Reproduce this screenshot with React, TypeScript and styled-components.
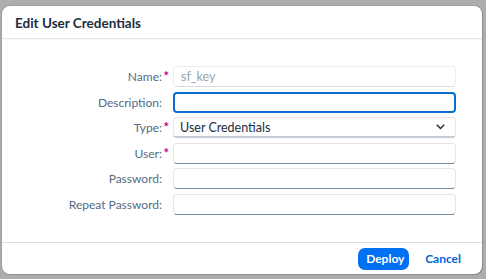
import React from "react";
import styled, { createGlobalStyle, css } from "styled-components";

const Global = createGlobalStyle`
  html, body { margin: 0; padding: 0; }
  body {
    background: #abadaf;
    font-family: "Lato", "Noto Sans", sans-serif;
    width: 486px;
    height: 279px;
    overflow: hidden;
  }
`;

const Dialog = styled.div`
  margin: 6px 0 0 2px;
  width: 480px;
  height: 268px;
  background: #fff;
  border-radius: 8px;
  box-shadow: 1px 1px 0 #8d8f92, 0 0 2px rgba(0,0,0,0.25);
  display: flex;
  flex-direction: column;
  overflow: hidden;
`;

const Header = styled.div`
  height: 31px;
  border-bottom: 1px solid #e8e8e8;
  display: flex;
  align-items: center;
  padding-left: 13px;
  padding-top: 1px;
  box-shadow: 0 1px 1px rgba(0,0,0,0.03);
`;

const Title = styled.h1`
  margin: 0;
  font-size: 13.5px;
  font-weight: 700;
  color: #1d2d3e;
`;

const Content = styled.div`
  flex: 1;
  padding-top: 27px;
`;

const Form = styled.div`
  display: grid;
  grid-template-columns: 167px 283px;
  column-gap: 4px;
  row-gap: 4.6px;
  grid-auto-rows: 21px;
`;

const Label = styled.label<{ $required?: boolean }>`
  display: flex;
  align-items: center;
  justify-content: flex-end;
  padding-right: 7px;
  font-size: 12px;
  color: #556b82;
  position: relative;
  ${(p) =>
    p.$required &&
    css`
      &::after {
        content: "*";
        position: absolute;
        right: 0px;
        top: 2px;
        color: #ba066c;
        font-size: 13px;
        font-weight: 700;
      }
    `}
`;

const fieldBase = css`
  box-sizing: border-box;
  height: 21px;
  border-radius: 4px;
  background: #fff;
  font-family: inherit;
  font-size: 12.5px;
  color: #1d2d3e;
  outline: none;
`;

const Input = styled.input<{ $variant?: "readonly" | "focus" | "normal" }>`
  ${fieldBase}
  width: 100%;
  padding: 0 7px;
  border: 1px solid #e5e5e5;
  border-bottom-color: #788a9b;
  ${(p) =>
    p.$variant === "readonly" &&
    css`
      color: #9aa4ae;
      border-color: #ececec;
      border-bottom-color: #d9dde1;
    `}
  ${(p) =>
    p.$variant === "focus" &&
    css`
      border: 2px solid #0a6ed1;
      border-radius: 4px;
    `}
`;

const Select = styled.div`
  ${fieldBase}
  display: flex;
  align-items: center;
  justify-content: space-between;
  padding: 0 10px 0 6px;
  border: 1px solid #e8e8e8;
  border-bottom: 2px solid #c4cbd2;
  box-shadow: 0 0 1px rgba(0,0,0,0.05);
`;

const Footer = styled.div`
  height: 31px;
  border-top: 1px solid #dcdcdc;
  display: flex;
  align-items: center;
  justify-content: flex-end;
  gap: 13px;
  padding-right: 18px;
`;

const Button = styled.button<{ $primary?: boolean }>`
  font-family: inherit;
  font-size: 12px;
  font-weight: 700;
  height: 22px;
  border-radius: 7px;
  border: none;
  padding: 0 8px;
  cursor: pointer;
  ${(p) =>
    p.$primary
      ? css`
          background: #0070f2;
          color: #fff;
          width: 51px;
        `
      : css`
          background: transparent;
          color: #0064d9;
          padding: 0 3px;
        `}
`;

const Chevron = () => (
  <svg width="9" height="6" viewBox="0 0 9 6" fill="none">
    <path d="M0.8 0.8l3.7 3.7L8.2 0.8" stroke="#1d2d3e" strokeWidth="1.5" />
  </svg>
);

export default function App() {
  return (
    <>
      <Global />
      <Dialog>
        <Header>
          <Title>Edit User Credentials</Title>
        </Header>
        <Content>
          <Form>
            <Label $required>Name:</Label>
            <Input $variant="readonly" readOnly value="sf_key" />
            <Label>Description:</Label>
            <Input $variant="focus" readOnly value="" />
            <Label $required>Type:</Label>
            <Select>
              <span>User Credentials</span>
              <Chevron />
            </Select>
            <Label $required>User:</Label>
            <Input readOnly value="" />
            <Label>Password:</Label>
            <Input readOnly value="" />
            <Label>Repeat Password:</Label>
            <Input readOnly value="" />
          </Form>
        </Content>
        <Footer>
          <Button $primary>Deploy</Button>
          <Button>Cancel</Button>
        </Footer>
      </Dialog>
    </>
  );
}
